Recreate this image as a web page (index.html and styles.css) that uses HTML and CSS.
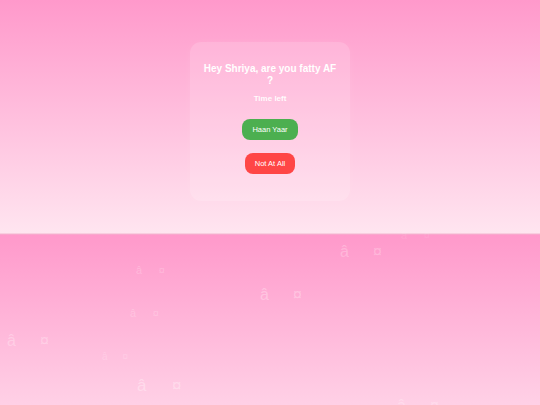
FILE: index.html
```html
<!DOCTYPE html>
<html lang="en">
<head>
<meta charset="utf-8">
<title>Hey Shriya</title>
<link rel="stylesheet" href="styles.css">
</head>
<body>
<main class="stage">
  <section class="card">
    <h2 class="title">Hey Shriya, are you fatty AF ?</h2>
    <p class="timer">Time left</p>
    <div class="actions">
      <button class="btn btn-yes">Haan Yaar</button>
      <button class="btn btn-no">Not At All</button>
    </div>
  </section>
</main>
<div class="hearts">
  <span class="heart h1"><span>â</span><span>¤</span></span>
  <span class="heart h2"><span>â</span><span>¤</span></span>
  <span class="heart h3"><span>â</span><span>¤</span></span>
  <span class="heart h4"><span>â</span><span>¤</span></span>
  <span class="heart h5"><span>â</span><span>¤</span></span>
  <span class="heart h6"><span>â</span><span>¤</span></span>
  <span class="heart h7"><span>â</span><span>¤</span></span>
  <span class="heart h8"><span>â</span><span>¤</span></span>
  <span class="heart h9"><span>â</span><span>¤</span></span>
</div>
</body>
</html>
```
FILE: styles.css
```css
html {
  margin: 0;
  height: 100%;
  background-color: #ff99cc;
  background-image: linear-gradient(to bottom, #ff99cb 0px, #ffe5f0 233px, #f3b5cf 234px, #ff99cb 235px);
  background-size: 100% 235px;
  background-repeat: repeat-y;
}

body {
  margin: 0;
  font-family: "Liberation Sans", Arial, sans-serif;
  color: #ffffff;
}

.stage {
  display: flex;
  justify-content: center;
  padding-top: 42px;
}

.card {
  width: 136px;
  padding: 21px 12px 27px;
  border-radius: 11px;
  background: rgba(255, 255, 255, 0.16);
  box-shadow: 0 2px 10px rgba(255, 255, 255, 0.08);
  text-align: center;
}

.title {
  margin: 0;
  font-size: 10px;
  line-height: 12px;
  font-weight: bold;
}

.timer {
  margin: 7px 0 0;
  font-size: 8px;
  line-height: 10px;
  font-weight: bold;
  color: rgba(255, 255, 255, 0.95);
}

.actions {
  margin-top: 15px;
  display: flex;
  flex-direction: column;
  align-items: center;
  gap: 13px;
}

.btn {
  border: none;
  margin: 0;
  height: 21px;
  padding: 0 10px;
  border-radius: 8px;
  font-family: "Liberation Sans", Arial, sans-serif;
  font-size: 7.5px;
  color: #ffffff;
}

.btn-yes {
  background: #4caf50;
}

.btn-no {
  background: #ff4646;
}

.hearts {
  position: absolute;
  left: 0;
  top: 0;
  width: 540px;
  height: 405px;
  overflow: hidden;
  pointer-events: none;
}

.heart {
  position: absolute;
  display: flex;
  gap: 1.5em;
  line-height: 1;
  font-family: "Liberation Sans", Arial, sans-serif;
  color: rgba(255, 255, 255, 0.3);
}

.h1 { left: 136px; top: 265px; font-size: 11px; color: rgba(255,255,255,0.22); }
.h2 { left: 260px; top: 287px; font-size: 16px; color: rgba(255,255,255,0.3); }
.h3 { left: 340px; top: 244px; font-size: 16px; color: rgba(255,255,255,0.25); }
.h4 { left: 7px; top: 333px; font-size: 16px; color: rgba(255,255,255,0.28); }
.h5 { left: 130px; top: 308px; font-size: 11px; color: rgba(255,255,255,0.22); }
.h6 { left: 102px; top: 352px; font-size: 10px; color: rgba(255,255,255,0.2); }
.h7 { left: 137px; top: 377px; font-size: 17px; color: rgba(255,255,255,0.32); }
.h8 { left: 397px; top: 398px; font-size: 16px; color: rgba(255,255,255,0.25); }
.h9 { left: 401px; top: 230px; font-size: 11px; color: rgba(255,255,255,0.1); }
```
